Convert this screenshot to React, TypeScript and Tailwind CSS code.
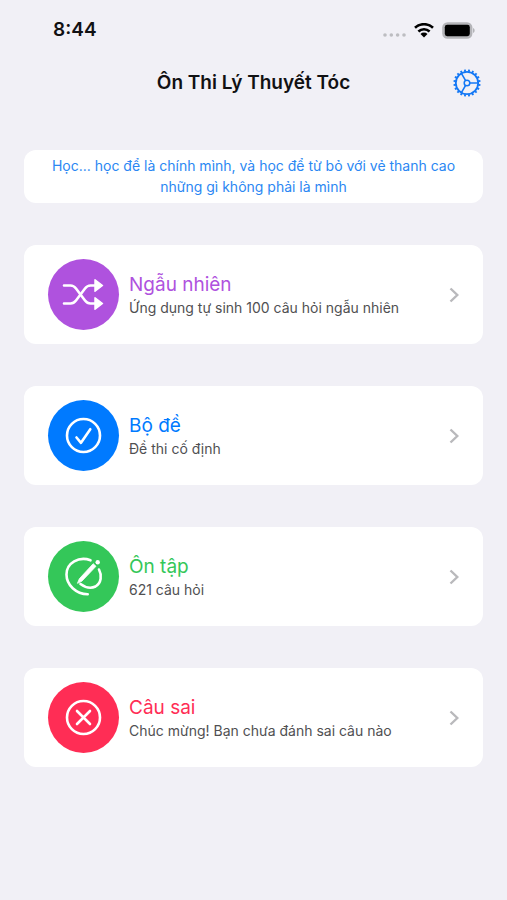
import type { ReactNode } from "react";

const teeth = Array.from({ length: 20 }, (_, i) => i * 18 + 9);

function GearIcon() {
  return (
    <svg viewBox="0 0 28 28" className="size-7" fill="none" stroke="currentColor" aria-hidden="true">
      <circle cx="14" cy="14" r="11.2" strokeWidth="1.8" />
      <circle cx="14" cy="14" r="2.8" strokeWidth="1.5" />
      {teeth.map((a) => (
        <path key={a} d="M14 2.6V0.4" strokeWidth="1.9" transform={`rotate(${a} 14 14)`} />
      ))}
      <path d="M16.8 14H25.2M12.6 11.6L8.4 4.3M12.6 16.4L8.4 23.7" strokeWidth="1.6" />
    </svg>
  );
}

function StatusIcons() {
  return (
    <div className="flex items-center">
      <svg viewBox="0 0 24 17" className="mr-2 h-[17px] w-6" fill="#bdbdc1" aria-hidden="true">
        <circle cx="3" cy="13" r="1.8" />
        <circle cx="9.3" cy="13" r="1.8" />
        <circle cx="15.6" cy="13" r="1.8" />
        <circle cx="22" cy="13" r="1.8" />
      </svg>
      <svg viewBox="0 0 20 15" className="mr-2 h-[15px] w-5" fill="none" stroke="#000" strokeWidth="2.6" aria-hidden="true">
        <path d="M1 4.8a13 13 0 0 1 18 0" />
        <path d="M4.4 8.5a8.2 8.2 0 0 1 11.2 0" />
        <path d="M10 14.4L6.5 11a5 5 0 0 1 7 0Z" fill="#000" stroke="none" />
      </svg>
      <svg viewBox="0 0 33 17" className="h-[17px] w-[33px]" aria-hidden="true">
        <rect x="0.2" y="0.2" width="30.2" height="16.6" rx="5.4" fill="#b4b4b8" />
        <rect x="2.8" y="2.8" width="25" height="11.4" rx="2.4" fill="#000" />
        <path d="M31 6v5c2.2-.7 2.2-4.3 0-5Z" fill="#b4b4b8" />
      </svg>
    </div>
  );
}

const shuffle = (
  <>
    <path d="M16 26.5h6.5c2.5 0 4 1 5.5 3L37 41.5c1.5 2 3 3 5.5 3H48" />
    <path d="M16 44.5h6.5c2.5 0 4-1 5.5-3L37 29.5c1.5-2 3-3 5.5-3H48" />
    <path d="M47 20.8L54.5 26.5L47 32.2ZM47 38.8L54.5 44.5L47 50.2Z" fill="currentColor" strokeWidth="1.5" />
  </>
);

const check = (
  <>
    <circle cx="35.5" cy="35.5" r="16.5" />
    <path d="M28.5 37.5L33 42.8L42.3 29.2" />
  </>
);

const pencil = (
  <>
    <path d="M42.5 19.3C31 15 18.5 22 18.5 33.5C18.5 44 28 53 39.7 53.2" />
    <path d="M51 28.5C54 34 53.5 42 47.5 45.5C42.5 48 36.5 46 32.5 43" />
    <path d="M29.6 42L31.3 37.8L45.2 22.7L48 25.3L33.8 40.2Z" fill="currentColor" strokeWidth="0.8" />
    <circle cx="49.7" cy="21.3" r="2.2" fill="currentColor" stroke="none" />
  </>
);

const cross = (
  <>
    <circle cx="35.5" cy="35.5" r="16.5" />
    <path d="M29 29L42 42M42 29L29 42" />
  </>
);

type Item = { title: string; detail: string; icon: ReactNode; text: string; fill: string };

const items: Item[] = [
  { title: "Ngẫu nhiên", detail: "Ứng dụng tự sinh 100 câu hỏi ngẫu nhiên", icon: shuffle, text: "text-[#af52de]", fill: "bg-[#af52de]" },
  { title: "Bộ đề", detail: "Đề thi cố định", icon: check, text: "text-[#007aff]", fill: "bg-[#007aff]" },
  { title: "Ôn tập", detail: "621 câu hỏi", icon: pencil, text: "text-[#34c759]", fill: "bg-[#34c759]" },
  { title: "Câu sai", detail: "Chúc mừng! Bạn chưa đánh sai câu nào", icon: cross, text: "text-[#ff2d55]", fill: "bg-[#ff2d55]" },
];

function MenuCard({ item }: { item: Item }) {
  return (
    <button type="button" className="flex w-full items-center rounded-xl bg-white px-6 py-3.5 text-left">
      <span className={`mr-2.5 size-[71px] shrink-0 rounded-full text-white ${item.fill}`}>
        <svg viewBox="0 0 71 71" className="size-full" fill="none" stroke="currentColor" strokeWidth="2.6" strokeLinecap="round" strokeLinejoin="round" aria-hidden="true">
          {item.icon}
        </svg>
      </span>
      <span className="min-w-0 flex-1 pt-0.5">
        <span className={`block text-[19px] leading-6 ${item.text}`}>{item.title}</span>
        <span className="block text-sm leading-[22px] text-[#505052]">{item.detail}</span>
      </span>
      <svg viewBox="0 0 10 16" className="h-4 w-2.5 shrink-0" fill="none" stroke="#b9b9bc" strokeWidth="2.4" aria-hidden="true">
        <path d="M1.5 1.5L8.3 8L1.5 14.5" />
      </svg>
    </button>
  );
}

export default function App() {
  return (
    <div className="min-h-screen bg-[#f1f0f6] font-['Inter','Noto_Sans',sans-serif] text-[#111113]">
      <div className="flex h-[60px] items-center justify-between pr-8 pl-[53px]">
        <time className="text-[19px] leading-7 font-semibold">8:44</time>
        <StatusIcons />
      </div>
      <header className="grid h-[46px] grid-cols-[1fr_auto_1fr] items-center px-[26px]">
        <h1 className="col-start-2 text-[19px] leading-7 font-semibold">Ôn Thi Lý Thuyết Tóc</h1>
        <button type="button" aria-label="Cài đặt" className="justify-self-end text-[#1478f5]">
          <GearIcon />
        </button>
      </header>
      <main className="flex flex-col gap-[42px] px-6 pt-11 pb-10">
        <p className="rounded-xl bg-white px-6 pt-[5px] pb-1.5 text-center text-sm leading-[21px] text-[#2b87f3]">
          Học... học để là chính mình, và học để từ bỏ với vẻ thanh cao những gì không phải là mình
        </p>
        {items.map((item) => (
          <MenuCard key={item.title} item={item} />
        ))}
      </main>
    </div>
  );
}
